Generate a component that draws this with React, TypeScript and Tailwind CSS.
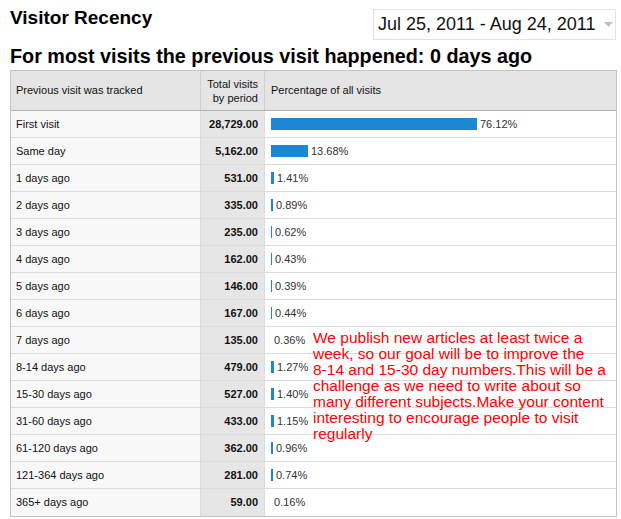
import React from "react";

type Row = { label: string; total: string; pct: string; bar: number };

const rows: Row[] = [
  { label: "First visit", total: "28,729.00", pct: "76.12%", bar: 206 },
  { label: "Same day", total: "5,162.00", pct: "13.68%", bar: 37 },
  { label: "1 days ago", total: "531.00", pct: "1.41%", bar: 3 },
  { label: "2 days ago", total: "335.00", pct: "0.89%", bar: 2 },
  { label: "3 days ago", total: "235.00", pct: "0.62%", bar: 1 },
  { label: "4 days ago", total: "162.00", pct: "0.43%", bar: 1 },
  { label: "5 days ago", total: "146.00", pct: "0.39%", bar: 1 },
  { label: "6 days ago", total: "167.00", pct: "0.44%", bar: 1 },
  { label: "7 days ago", total: "135.00", pct: "0.36%", bar: 0 },
  { label: "8-14 days ago", total: "479.00", pct: "1.27%", bar: 3 },
  { label: "15-30 days ago", total: "527.00", pct: "1.40%", bar: 3 },
  { label: "31-60 days ago", total: "433.00", pct: "1.15%", bar: 3 },
  { label: "61-120 days ago", total: "362.00", pct: "0.96%", bar: 2 },
  { label: "121-364 days ago", total: "281.00", pct: "0.74%", bar: 2 },
  { label: "365+ days ago", total: "59.00", pct: "0.16%", bar: 0 },
];

export default function App() {
  return (
    <div className="relative w-[621px] h-[519px] bg-white text-black font-['Liberation_Sans',Arial,sans-serif] overflow-hidden">
      <div className="flex justify-between items-start pl-[10px] pr-[5px]">
        <div className="mt-[7px] text-[19px] leading-[22px] font-bold">Visitor Recency</div>
        <div className="mt-[9px] h-[31px] w-[243px] border border-[#e3e3e3] flex items-stretch bg-white">
          <div className="flex-1 pl-[4px] text-[18px] leading-[29px] whitespace-nowrap overflow-visible text-[#111]">
            Jul 25, 2011 - Aug 24, 2011
          </div>
          <div className="w-[13px] flex items-center justify-center">
            <svg width="9" height="5" viewBox="0 0 9 5">
              <path d="M0 0 L9 0 L4.5 5 Z" fill="#c2c2c2" />
            </svg>
          </div>
        </div>
      </div>
      <div className="pl-[10px] mt-[5px] text-[19.8px] leading-[23px] font-bold">
        For most visits the previous visit happened: 0 days ago
      </div>
      <div className="ml-[10px] mt-[2px] w-[607px] border border-[#c4c4c4] text-[11px] text-[#111]">
        <div className="flex h-[40px] bg-[#e5e5e5] border-b border-[#b4b4b4]">
          <div className="w-[190px] border-r border-[#d0d0d0] pl-[5px] flex items-center">
            Previous visit was tracked
          </div>
          <div className="w-[64px] border-r border-[#d0d0d0] pr-[6px] flex flex-col justify-center items-end text-right leading-[14px]">
            <span>Total visits</span>
            <span>by period</span>
          </div>
          <div className="flex-1 pl-[6px] flex items-center">Percentage of all visits</div>
        </div>
        {rows.map((r, i) => (
          <div
            key={r.label}
            className={
              "flex h-[27px] " + (i < rows.length - 1 ? "border-b border-[#dcdcdc]" : "")
            }
          >
            <div className="w-[190px] bg-[#f8f8f8] border-r border-[#dcdcdc] pl-[5px] flex items-center">
              {r.label}
            </div>
            <div className="w-[64px] bg-[#e6e6e6] border-r border-[#dcdcdc] pr-[6px] flex items-center justify-end font-bold">
              {r.total}
            </div>
            <div className="flex-1 bg-white pl-[6px] flex items-center gap-[3px] text-[#333]">
              <div className="h-[12px] bg-[#1e87d3]" style={{ width: r.bar }} />
              <span>{r.pct}</span>
            </div>
          </div>
        ))}
      </div>
      <div className="absolute left-[313px] top-[330px] text-[15.5px] leading-[16px] text-[#ff0000] whitespace-nowrap">
        We publish new articles at least twice a
        <br />
        week, so our goal will be to improve the
        <br />
        8-14 and 15-30 day numbers.This will be a
        <br />
        challenge as we need to write about so
        <br />
        many different subjects.Make your content
        <br />
        interesting to encourage people to visit
        <br />
        regularly
      </div>
    </div>
  );
}
